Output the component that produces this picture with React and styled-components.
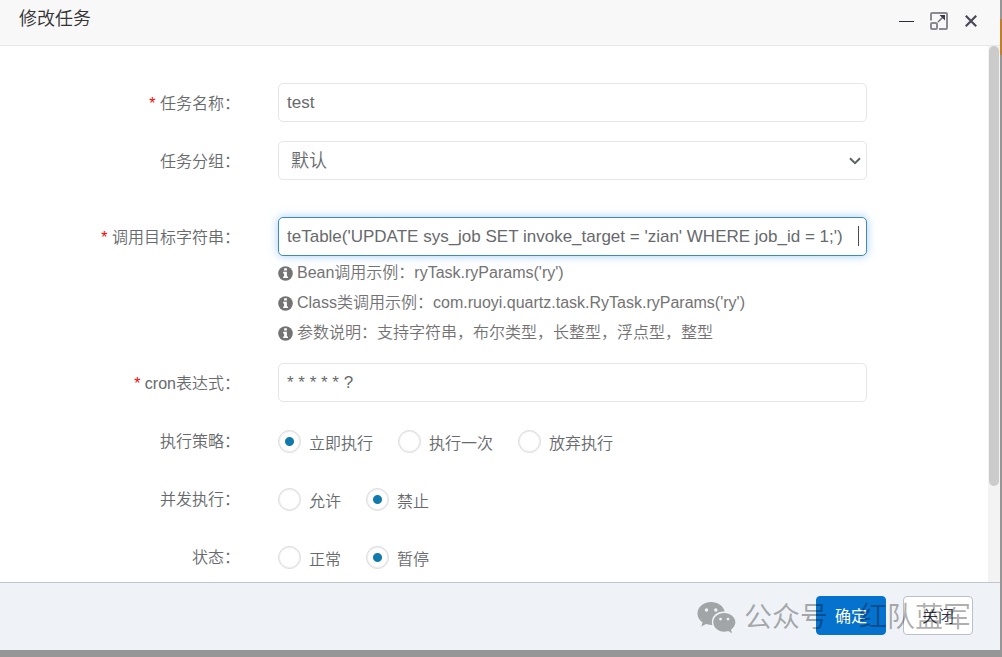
import React, { useEffect, useRef, useState } from 'react'
import styled, { createGlobalStyle } from 'styled-components'

const policies = ['立即执行', '执行一次', '放弃执行']
const concurrency = ['允许', '禁止']
const states = ['正常', '暂停']

const hints = [
  "Bean调用示例：ryTask.ryParams('ry')",
  "Class类调用示例：com.ruoyi.quartz.task.RyTask.ryParams('ry')",
  '参数说明：支持字符串，布尔类型，长整型，浮点型，整型',
]

const InfoIcon = () => (
  <svg width="15" height="15" viewBox="0 0 14 14" aria-hidden="true">
    <circle cx="7" cy="7" r="6.8" fill="currentColor" />
    <path d="M5.700 2.200h2.600v2H5.700zM4.800 5.300h3.500v4.400h1v1.600H4.800V9.700h.9V6.900h-.9z" fill="#fff" />
  </svg>
)

const WechatIcon = () => (
  <svg width="40" height="32" viewBox="0 0 40 32" aria-hidden="true">
    <path
      fillRule="evenodd"
      fill="currentColor"
      d="M14 0C6.300 0 .5 5.200 .5 11.600c0 3.700 1.900 6.800 5.100 8.900L4.300 24.600l4.800-2.500c1.800.5 3.200.8 4.900.8h1.300c-.3-.9-.4-1.900-.4-2.900 0-5.900 5-10.500 11.600-10.500h1.200C26.500 4 20.800 0 14 0zM9.500 6.300a1.700 1.700 0 1 1 0 3.400 1.700 1.700 0 0 1 0-3.400zM18.800 6.300a1.700 1.700 0 1 1 0 3.400 1.700 1.700 0 0 1 0-3.400zM27.200 10.900c-6.300 0-11 4.300-11 9.400s4.700 9.400 11 9.400c1.400 0 2.700-.3 4-.6l3.900 2.100-1.100-3.500c2.600-1.900 4.400-4.500 4.400-7.400 0-5.100-5-9.400-11.200-9.400zM23.500 15.700a1.400 1.400 0 1 1 0 2.800 1.400 1.400 0 0 1 0-2.800zM31 15.700a1.400 1.400 0 1 1 0 2.800 1.400 1.400 0 0 1 0-2.800z"
    />
  </svg>
)

const RadioGroup = ({ name, label, options, value, onChange }) => (
  <Row role="radiogroup" aria-label={label}>
    <Label as="span">{label}：</Label>
    <Radios>
      {options.map((option) => (
        <RadioLabel key={option}>
          <Radio name={name} checked={value === option} onChange={() => onChange(option)} />
          {option}
        </RadioLabel>
      ))}
    </Radios>
  </Row>
)

const App = () => {
  const [name, setName] = useState('test')
  const [target, setTarget] = useState(
    "teTable('UPDATE sys_job SET invoke_target = 'zian' WHERE job_id = 1;')"
  )
  const [cron, setCron] = useState('* * * * * ?')
  const [policy, setPolicy] = useState('立即执行')
  const [concurrent, setConcurrent] = useState('禁止')
  const [status, setStatus] = useState('暂停')
  const targetRef = useRef(null)

  // put the cursor at the end of the invoke target
  useEffect(() => {
    const input = targetRef.current
    input.focus()
    input.setSelectionRange(input.value.length, input.value.length)
  }, [])

  return (
    <Backdrop>
      <GlobalStyle />
      <Dialog role="dialog" aria-labelledby="dialog-title">
        <Header>
          <Title id="dialog-title">修改任务</Title>
          <WindowButtons>
            <IconButton aria-label="最小化">
              <svg width="20" height="20" viewBox="0 0 20 20">
                <path d="M2 10.500h15" stroke="#2e2d3c" strokeWidth="1" />
              </svg>
            </IconButton>
            <IconButton aria-label="最大化">
              <svg width="20" height="20" viewBox="0 0 20 20" fill="none" stroke="#8b8a93" strokeWidth="2">
                <path d="M2 9.500V3q0-1 1-1h14q1 0 1 1v14q0 1-1 1h-7" />
                <rect x="2" y="12" width="6" height="6" rx="1" />
                <path d="M9 11l5.500-5.500" stroke="#6b6a75" strokeWidth="1.500" />
                <path d="M10.500 4h5.500v5.500z" fill="#3c3b49" stroke="none" />
              </svg>
            </IconButton>
            <IconButton aria-label="关闭窗口">
              <svg width="20" height="20" viewBox="0 0 20 20">
                <path d="M4.800 4.800l10.400 10.400M15.200 4.800L4.800 15.200" stroke="#4a4957" strokeWidth="2.200" />
              </svg>
            </IconButton>
          </WindowButtons>
        </Header>

        <Body>
          <Form id="job-form" onSubmit={(e) => e.preventDefault()}>
            <Row>
              <Label htmlFor="jobName" $required>任务名称：</Label>
              <Field>
                <Input id="jobName" value={name} onChange={(e) => setName(e.target.value)} />
              </Field>
            </Row>
            <Row $after={37}>
              <Label htmlFor="jobGroup">任务分组：</Label>
              <SelectWrap>
                <Select id="jobGroup" defaultValue="DEFAULT">
                  <option value="DEFAULT">默认</option>
                  <option value="SYSTEM">系统</option>
                </Select>
                <svg width="12" height="8" viewBox="0 0 12 8" fill="none" aria-hidden="true">
                  <path d="M1 1.200l5 5 5-5" stroke="#5f6264" strokeWidth="2" />
                </svg>
              </SelectWrap>
            </Row>
            <Row $after={15}>
              <Label htmlFor="invokeTarget" $required>调用目标字符串：</Label>
              <Field>
                <Input
                  id="invokeTarget"
                  ref={targetRef}
                  value={target}
                  onChange={(e) => setTarget(e.target.value)}
                />
                <Caret />
                <Hints>
                  {hints.map((hint) => (
                    <Hint key={hint}>
                      <InfoIcon />
                      {hint}
                    </Hint>
                  ))}
                </Hints>
              </Field>
            </Row>
            <Row>
              <Label htmlFor="cron" $required>cron表达式：</Label>
              <Field>
                <Input id="cron" value={cron} onChange={(e) => setCron(e.target.value)} />
              </Field>
            </Row>
            <RadioGroup name="policy" label="执行策略" options={policies} value={policy} onChange={setPolicy} />
            <RadioGroup
              name="concurrent"
              label="并发执行"
              options={concurrency}
              value={concurrent}
              onChange={setConcurrent}
            />
            <RadioGroup name="status" label="状态" options={states} value={status} onChange={setStatus} />
          </Form>
          <Track>
            <Thumb />
          </Track>
        </Body>

        <Footer>
          <Button type="submit" form="job-form" $primary>确定</Button>
          <Button type="button">关闭</Button>
          <Watermark>
            <WechatIcon />
            <span>公众号<Dot> · </Dot>红队蓝军</span>
          </Watermark>
        </Footer>
      </Dialog>
    </Backdrop>
  )
}

// --- STYLED COMPONENTS ---

const GlobalStyle = createGlobalStyle`
  * {
    box-sizing: border-box;
  }

  body {
    margin: 0;
    color: #676a6c;
    font-family: 'Liberation Sans', 'Noto Sans CJK SC', sans-serif;
    font-size: 16px;
    font-weight: 350;
  }

  button, input, select {
    font: inherit;
    color: inherit;
  }
`

const Backdrop = styled.div`
  height: 100vh;
  padding: 0 2px 7px 0;
  background: linear-gradient(#969696 19px, #c17d2b 19px, #c17d2b 55px, #969696 55px);
`

const Dialog = styled.section`
  height: 100%;
  display: flex;
  flex-direction: column;
  background: #fff;
`

const Header = styled.header`
  display: flex;
  justify-content: space-between;
  height: 46px;
  padding: 0 19px;
  background: #f8f8f8;
  border-bottom: 1px solid #e7e7e7;
`

const Title = styled.h1`
  margin: 0;
  color: #333;
  font-size: 18px;
  font-weight: 350;
  line-height: 38px;
`

const WindowButtons = styled.div`
  display: flex;
  gap: 12px;
  padding-top: 11px;
`

const IconButton = styled.button`
  width: 20px;
  height: 20px;
  padding: 0;
  border: 0;
  background: none;
  cursor: pointer;

  svg { display: block; }
`

const Body = styled.main`
  flex: 1;
  min-height: 0;
  display: flex;
`

const Form = styled.form`
  flex: 1;
  min-width: 0;
  overflow: hidden;
  padding: 37px 24px 0;
`

const Row = styled.div`
  display: grid;
  grid-template-columns: 3fr 8fr 1fr;
  margin-bottom: ${(p) => p.$after || 19}px;

  > * {
    min-width: 0;
    margin: 0 19px;
  }
`

const Label = styled.label`
  height: 39px;
  line-height: 42px;
  text-align: right;
  white-space: nowrap;

  &::before {
    content: ${(p) => (p.$required ? "'* '" : 'none')};
    color: red;
  }
`

const Field = styled.div`
  position: relative;
`

const Input = styled.input`
  display: block;
  width: 100%;
  height: 39px;
  padding: 0 8px;
  border: 1px solid #e5e6e7;
  border-radius: 5px;
  background: #fff;
  font-size: 17px;
  outline: none;

  &:focus {
    border-color: #3c8dbc;
    box-shadow: 0 0 10px rgba(102, 175, 233, 0.6);
    caret-color: transparent;
  }
`

const Caret = styled.i`
  position: absolute;
  top: 9px;
  right: 8px;
  width: 1px;
  height: 20px;
  background: #4a4c4e;
`

const SelectWrap = styled.div`
  display: grid;
  align-items: center;

  > * { grid-area: 1 / 1; }

  svg {
    justify-self: end;
    margin-right: 6px;
    pointer-events: none;
  }
`

const Select = styled.select`
  width: 100%;
  height: 39px;
  padding: 0 12px;
  border: 1px solid #e5e6e7;
  border-radius: 5px;
  background: #fff;
  font-size: 18px;
  appearance: none;
`

const Hints = styled.ul`
  margin: 2px 0 0;
  padding: 0;
  list-style: none;
  color: #737373;
`

const Hint = styled.li`
  display: flex;
  align-items: center;
  gap: 4px;
  height: 30px;
  line-height: 30px;
  white-space: nowrap;
`

const Radios = styled.div`
  display: flex;
  gap: 25px;
  padding-top: 2px;
`

const RadioLabel = styled.label`
  display: flex;
  align-items: center;
  gap: 8px;
  white-space: nowrap;
`

const Radio = styled.input.attrs({ type: 'radio' })`
  appearance: none;
  width: 23px;
  height: 23px;
  margin: 0;
  border: 1px solid #dadada;
  border-radius: 50%;
  background: #fff;
  box-shadow: inset 0 0 0 1px #efefef;

  &:checked {
    background: radial-gradient(circle, #1079ae 4px, #fff 5px);
  }
`

const Track = styled.div`
  width: 12px;
  padding-left: 1px;
  background: #f3f3f3;
`

const Thumb = styled.div`
  width: 10px;
  height: 82%;
  border-radius: 5px;
  background: #cbcbcb;
`

const Footer = styled.footer`
  position: relative;
  display: flex;
  justify-content: flex-end;
  gap: 17px;
  height: 68px;
  padding: 13px 27px 0;
  background: #eff3f7;
  border-top: 1px solid #c5c5c5;
`

const Button = styled.button`
  width: 70px;
  height: 39px;
  padding: 0 0 2px;
  border: 1px solid ${(p) => (p.$primary ? '#0572ce' : '#b9bfcb')};
  border-radius: 4px;
  background: ${(p) => (p.$primary ? '#0572ce' : '#fff')};
  color: ${(p) => (p.$primary ? '#fff' : '#333748')};
  font-weight: ${(p) => (p.$primary ? 400 : 350)};
  cursor: pointer;
`

const Watermark = styled.div`
  position: absolute;
  right: 29px;
  top: 15px;
  display: flex;
  align-items: center;
  gap: 7px;
  color: rgba(0, 0, 0, 0.32);
  font-size: 28px;
  font-weight: 400;
  line-height: 40px;
  white-space: nowrap;
  pointer-events: none;
`

const Dot = styled.span`
  margin: 0 3px;
`

export default App
